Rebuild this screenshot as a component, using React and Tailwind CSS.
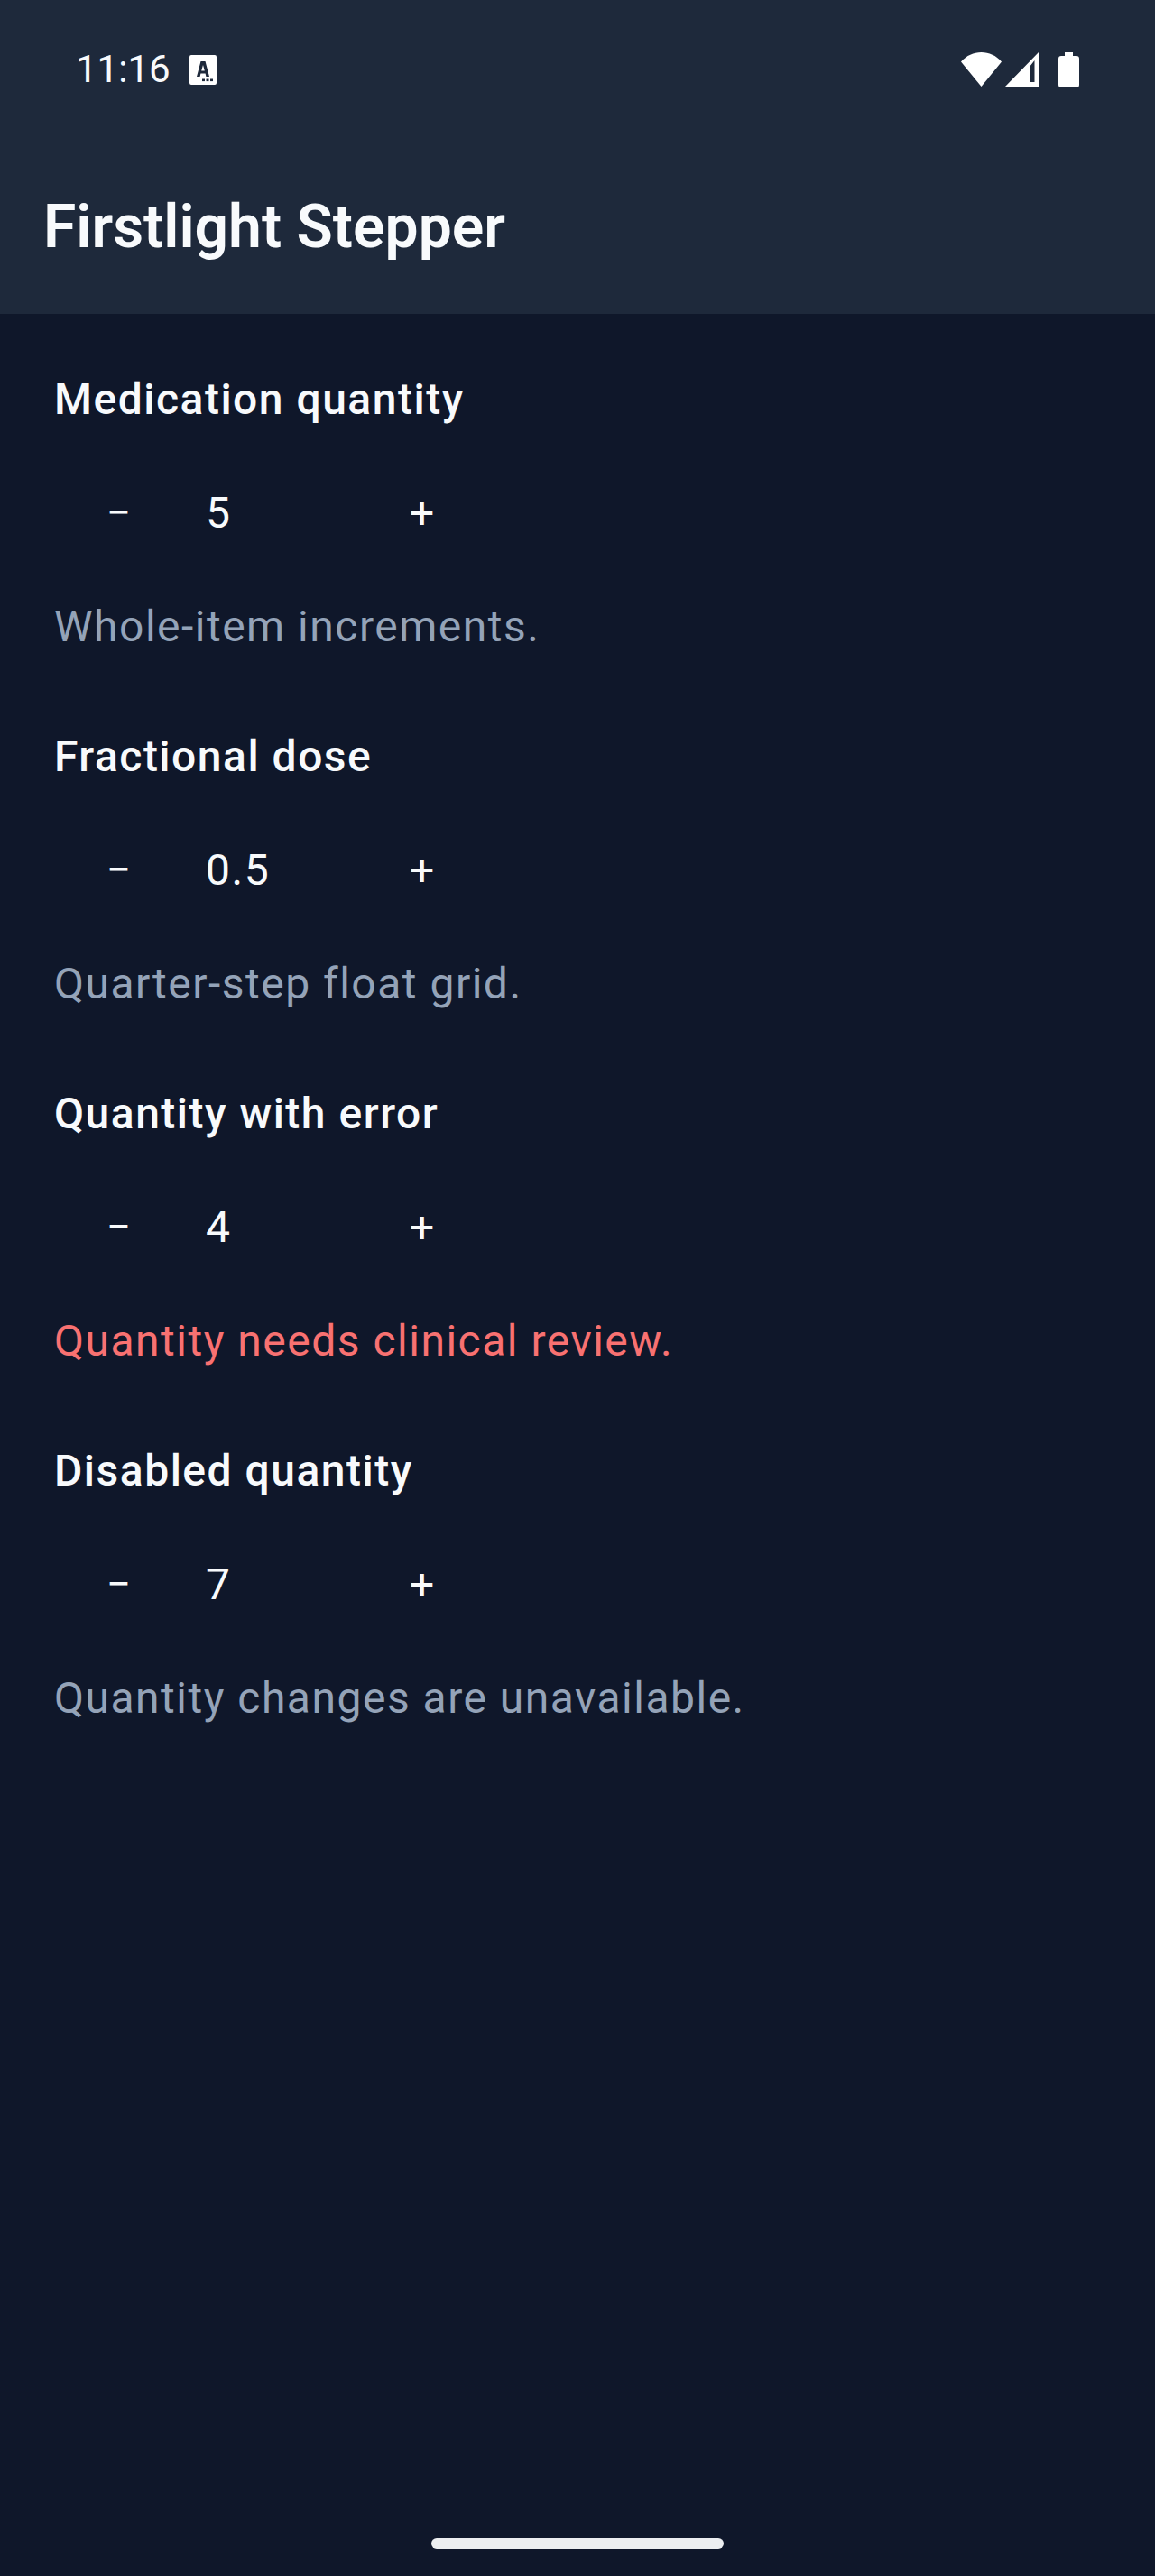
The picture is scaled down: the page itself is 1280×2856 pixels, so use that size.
import React from 'react';

const ROBOTO = { fontFamily: 'Roboto, sans-serif' };

const steppers = [
  { label: 'Medication quantity', value: '5', help: 'Whole-item increments.' },
  { label: 'Fractional dose', value: '0.5', help: 'Quarter-step float grid.' },
  { label: 'Quantity with error', value: '4', help: 'Quantity needs clinical review.', error: true },
  { label: 'Disabled quantity', value: '7', help: 'Quantity changes are unavailable.' },
];

function KeyboardBadge() {
  return (
    <svg width="30" height="33" viewBox="0 0 30 33" className="ml-[21px]">
      <path fillRule="evenodd" fill="#fff" d="M2 0h26a2 2 0 0 1 2 2v29a2 2 0 0 1-2 2H2a2 2 0 0 1-2-2V2a2 2 0 0 1 2-2zM12.500 7 8 24h3.600l.8-3.400h5.200l.8 3.400H22L17.500 7zM13.200 17.500l1.800-6.500 1.800 6.500z" />
      <rect x="14" y="26.500" width="3" height="2.600" fill="#1e293b" />
      <rect x="18.500" y="26.500" width="3" height="2.600" fill="#1e293b" />
      <rect x="23" y="26.500" width="3" height="2.600" fill="#1e293b" />
    </svg>
  );
}

function StatusIcons() {
  return (
    <div className="flex items-center">
      <svg width="45" height="38" viewBox="0 0 45 38">
        <path fill="#fff" d="M0 10.500C6 3.500 14 0 22.500 0S39 3.500 45 10.500L22.500 38z" />
      </svg>
      <svg width="38" height="38" viewBox="0 0 38 38" className="ml-[4px]">
        <path fill="#fff" fillRule="evenodd" d="M37 0v38H0zM32.500 9 27 16v17h5.500z" />
      </svg>
      <svg width="23" height="39" viewBox="0 0 23 39" className="ml-[21px]">
        <path fill="#fff" d="M7 0h9v4h4a3 3 0 0 1 3 3v29a3 3 0 0 1-3 3H3a3 3 0 0 1-3-3V7a3 3 0 0 1 3-3h4z" />
      </svg>
    </div>
  );
}

function Stepper({ label, value, help, error }) {
  return (
    <section className="flex flex-col">
      <h2 className="text-[48px] leading-[64px] font-medium tracking-[1.5px] text-[#f8fafc]">{label}</h2>
      <div className="flex items-center h-[143px] mt-[22px] mb-[23px] text-[#f8fafc]">
        <button className="w-[143px] h-[143px] flex items-center justify-center text-[48px]">−</button>
        <span className="w-[193px] pl-[25px] text-[48px] leading-[64px] tracking-[1.5px]">{value}</span>
        <button className="w-[143px] h-[143px] flex items-center justify-center text-[48px]">+</button>
      </div>
      <p className={`text-[48px] leading-[64px] tracking-[1.5px] ${error ? 'text-[#f87171]' : 'text-[#94a3b8]'}`}>{help}</p>
    </section>
  );
}

export default function App() {
  return (
    <div style={ROBOTO} className="w-[1280px] h-[2856px] flex flex-col bg-[#0f172a]">
      <header className="h-[348px] bg-[#1e293b] shrink-0">
        <div className="h-[154px] flex items-center justify-between pl-[84px] pr-[84px]">
          <div className="flex items-center text-[#f8fafc]">
            <span className="text-[42px] leading-none">11:16</span>
            <KeyboardBadge />
          </div>
          <StatusIcons />
        </div>
        <h1 className="pl-[48px] mt-[58px] text-[66px] leading-[80px] font-semibold text-[#f8fafc]">Firstlight Stepper</h1>
      </header>
      <main className="flex-1 flex flex-col gap-[80px] px-[60px] pt-[63px]">
        {steppers.map((s) => (
          <Stepper key={s.label} {...s} />
        ))}
      </main>
      <div className="flex justify-center pb-[30px]">
        <div className="w-[324px] h-[12px] rounded-full bg-[#eceef0]" />
      </div>
    </div>
  );
}
